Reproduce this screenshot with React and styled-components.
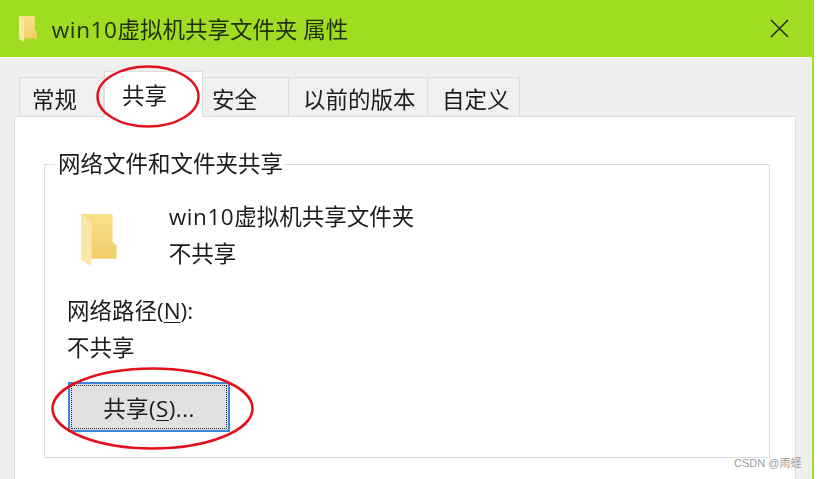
import React from "react";
import styled, { createGlobalStyle } from "styled-components";

const GlobalStyle = createGlobalStyle`
  html, body {
    margin: 0;
    height: 100%;
    background: #fff;
    overflow: hidden;
  }
  body {
    font-family: "Open Sans", "Noto Sans CJK SC", sans-serif;
    font-size: 22.5px;
    color: #1c1c1c;
  }
`;

const Stage = styled.div`
  position: relative;
  width: 817px;
  height: 479px;
  overflow: hidden;
  background: #fff;
`;

const Dialog = styled.div`
  width: 812px;
  height: 520px;
  border-right: 2px solid #a2dc28;
  display: flex;
  flex-direction: column;
  background: #efefef;
  filter: blur(0.5px);
`;

const TitleBar = styled.header`
  height: 57px;
  flex: none;
  display: flex;
  align-items: center;
  padding: 0 23px 0 19px;
  background: #9fdc22;
`;

const TitleText = styled.span`
  margin-left: 15px;
  flex: 1;
  padding-top: 2px;
  line-height: 55px;
  color: #20300a;
  white-space: pre;
`;

const Latin = styled.span`
  letter-spacing: 0.6px;
`;

const TabStrip = styled.nav`
  height: 45px;
  margin-top: 15px;
  padding-left: 19px;
  display: flex;
  align-items: flex-end;
  position: relative;
  z-index: 1;
  margin-bottom: -1px;
`;

const Tab = styled.div`
  box-sizing: border-box;
  width: ${(p) => p.$w}px;
  height: ${(p) => (p.$active ? 46 : 40)}px;
  padding-top: ${(p) => (p.$active ? 4 : 2)}px;
  padding-left: ${(p) => p.$pad}px;
  line-height: 40px;
  white-space: nowrap;
  background: ${(p) => (p.$active ? "#fff" : "#f0f0f0")};
  border: 1.5px solid #dcdcdc;
  border-left-width: ${(p) => (p.$first || p.$active ? 1.5 : 0)}px;
  border-bottom: ${(p) => (p.$active ? "none" : "1.5px solid #dcdcdc")};
`;

const Panel = styled.section`
  flex: 1;
  margin: 0 16px 0 14px;
  padding: 34px 25px 0 29px;
  background: #fff;
  border: 1.5px solid #dcdcdc;
`;

const Group = styled.fieldset`
  margin: 0;
  height: 307px;
  box-sizing: border-box;
  padding: 0;
  border: 1.5px solid #dcdcdc;
`;

const GroupTitle = styled.legend`
  margin-left: 10px;
  padding: 0 1px 0 3px;
  line-height: 26px;
`;

const GroupBody = styled.div`
  padding: 21px 0 0 22px;
`;

const FolderRow = styled.div`
  display: flex;
  align-items: flex-start;
  height: 94px;
  padding-left: 14px;
`;

const FolderSlot = styled.div`
  margin-top: 16px;
  flex: none;
`;

const FolderInfo = styled.div`
  margin-left: 52px;
`;

const TextLine = styled.div`
  height: 37px;
  line-height: 37px;
  white-space: nowrap;
`;

const ShareButton = styled.button`
  display: block;
  box-sizing: border-box;
  width: 162px;
  height: 50px;
  margin: 16px 0 0 1px;
  padding: 0;
  font: inherit;
  letter-spacing: 0.4px;
  color: inherit;
  background: #e1e1e1;
  border: 2.5px solid #3c86da;
  outline: 1.5px dotted #222;
  outline-offset: -4.5px;
`;

const Key = styled.span`
  text-decoration: underline;
  text-underline-offset: 3px;
  text-decoration-thickness: 1px;
`;

const Ring = styled.svg`
  position: absolute;
  left: ${(p) => p.$x}px;
  top: ${(p) => p.$y}px;
  width: ${(p) => p.$w}px;
  height: ${(p) => p.$h}px;
  overflow: visible;
  filter: blur(0.3px);
`;

const Watermark = styled.span`
  position: absolute;
  left: 734px;
  top: 455px;
  font-family: "Liberation Sans", "Noto Sans CJK SC", sans-serif;
  font-size: 11px;
  line-height: 16px;
  color: #9a9a9a;
  white-space: nowrap;
`;

const FolderIcon = ({ size, id }) => (
  <svg width={size * (35 / 51)} height={size} viewBox="0 0 35 51" style={{ flex: "none", display: "block" }}>
    <defs>
      <linearGradient id={id} x1="0" y1="0" x2="0" y2="1">
        <stop offset="0" stopColor="#fae08a" />
        <stop offset="1" stopColor="#f2cd68" />
      </linearGradient>
    </defs>
    <path d="M0 0H31V27L35 31V44H10V8Z" fill={`url(#${id})`} />
    <path d="M0 0 10 8V51L0 45Z" fill="#fbe7a8" />
  </svg>
);

const CloseIcon = () => (
  <svg width="19" height="19" viewBox="0 0 19 19">
    <path d="M1 1 18 18M18 1 1 18" stroke="#1d2a0a" strokeWidth="1.5" fill="none" />
  </svg>
);

const RedRing = ({ x, y, w, h }) => (
  <Ring $x={x} $y={y} $w={w} $h={h} viewBox={`0 0 ${w} ${h}`}>
    <ellipse
      cx={w / 2}
      cy={h / 2}
      rx={w / 2 - 1.5}
      ry={h / 2 - 1.5}
      fill="none"
      stroke="#e3101c"
      strokeWidth="2.5"
    />
  </Ring>
);

export default function App() {
  return (
    <Stage>
      <GlobalStyle />
      <Dialog>
        <TitleBar>
          <FolderIcon size={26} id="folder-small" />
          <TitleText><Latin>win10</Latin>虚拟机共享文件夹 属性</TitleText>
          <CloseIcon />
        </TitleBar>
        <TabStrip>
          <Tab $w={85} $pad={12} $first>常规</Tab>
          <Tab $w={99} $pad={17} $active>共享</Tab>
          <Tab $w={86} $pad={9}>安全</Tab>
          <Tab $w={139} $pad={14}>以前的版本</Tab>
          <Tab $w={92} $pad={14}>自定义</Tab>
        </TabStrip>
        <Panel>
          <Group>
            <GroupTitle>网络文件和文件夹共享</GroupTitle>
            <GroupBody>
              <FolderRow>
                <FolderSlot>
                  <FolderIcon size={52} id="folder-large" />
                </FolderSlot>
                <FolderInfo>
                  <TextLine><Latin>win10</Latin>虚拟机共享文件夹</TextLine>
                  <TextLine>不共享</TextLine>
                </FolderInfo>
              </FolderRow>
              <TextLine>网络路径(<Key>N</Key>):</TextLine>
              <TextLine>不共享</TextLine>
              <ShareButton>共享(<Key>S</Key>)...</ShareButton>
            </GroupBody>
          </Group>
        </Panel>
      </Dialog>
      <RedRing x={96} y={65} w={104} h={63} />
      <RedRing x={51} y={367} w={203} h={83} />
      <Watermark>CSDN @雨蛏</Watermark>
    </Stage>
  );
}
